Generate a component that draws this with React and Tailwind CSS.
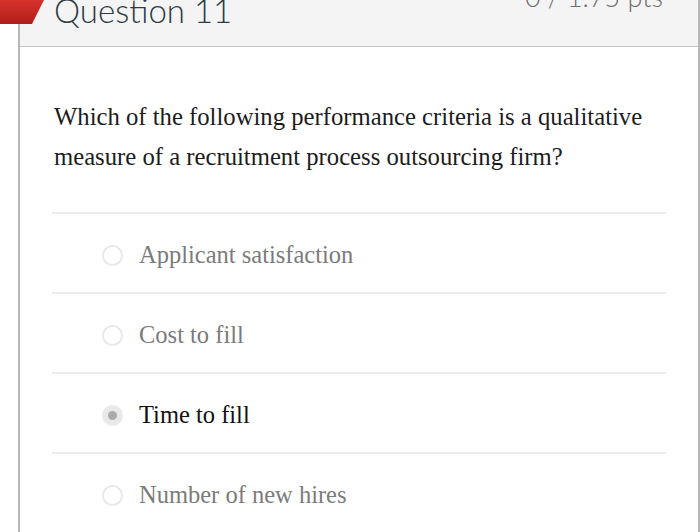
import React from "react";

const options = [
  { label: "Applicant satisfaction", selected: false },
  { label: "Cost to fill", selected: false },
  { label: "Time to fill", selected: true },
  { label: "Number of new hires", selected: false },
];

function Radio({ selected }) {
  if (selected) {
    return (
      <span className="flex h-[21px] w-[21px] shrink-0 items-center justify-center rounded-full bg-[#e9e9e9]">
        <span className="h-[9px] w-[9px] rounded-full bg-[#ababab]" />
      </span>
    );
  }
  return <span className="h-[21px] w-[21px] shrink-0 rounded-full border-2 border-[#e8e8e8] bg-white" />;
}

export default function App() {
  return (
    <div className="relative h-[532px] w-[700px] overflow-hidden bg-white">
      <svg className="absolute left-0 top-0 z-10" width="46" height="26" viewBox="0 0 46 26">
        <defs>
          <linearGradient id="flag" x1="0" y1="0" x2="0" y2="1">
            <stop offset="0" stopColor="#d8322c" />
            <stop offset="1" stopColor="#b01e1b" />
          </linearGradient>
        </defs>
        <polygon points="0,0 44,0 32,24 0,24" fill="url(#flag)" />
      </svg>
      <div className="ml-[18px] h-full w-[682px] border-x-2 border-[#b8b8b8]">
        <div className="flex h-[47px] items-start justify-between border-b border-[#c4c4c4] bg-[#f4f4f4] pl-[34px] pr-[35px] font-['Lato',sans-serif]">
          <div className="-mt-[6px] text-[33px] font-light leading-[33px] text-[#2d3b45]">Question 11</div>
          <div className="-mt-[17px] text-[27px] font-light leading-[28px] text-[#6e6e6e]">0 / 1.75 pts</div>
        </div>
        <div className="px-[32px] pt-[50px] font-['Liberation_Serif',serif]">
          <p className="pl-[2px] text-[24.7px] leading-[40px] text-[#1c1c1c]">
            Which of the following performance criteria is a qualitative measure of a recruitment process outsourcing firm?
          </p>
          <div className="mt-[35px]">
            {options.map((o) => (
              <div
                key={o.label}
                className="flex h-[80px] items-center gap-[16px] border-t-2 border-[#ececec] pl-[50px] pt-[4px]"
              >
                <Radio selected={o.selected} />
                <span className={`text-[24.5px] leading-none ${o.selected ? "text-[#111111]" : "text-[#7b7b7b]"}`}>
                  {o.label}
                </span>
              </div>
            ))}
          </div>
        </div>
      </div>
    </div>
  );
}
